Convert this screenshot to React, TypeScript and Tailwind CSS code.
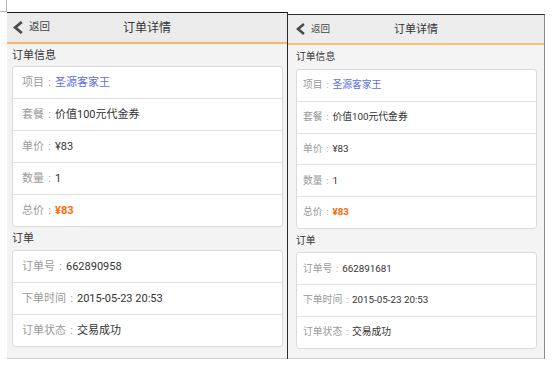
import React from "react";

type Row = { label: string; value: string; kind?: "link" | "total" | "plain" };

const card1: Row[] = [
  { label: "项目", value: "圣源客家王", kind: "link" },
  { label: "套餐", value: "价值100元代金券" },
  { label: "单价", value: "¥83" },
  { label: "数量", value: "1" },
  { label: "总价", value: "¥83", kind: "total" },
];

function Chevron({ w, h }: { w: number; h: number }) {
  return (
    <svg width={w} height={h} viewBox="0 0 10 13" className="shrink-0">
      <polyline points="8.8,1 2.2,6.5 8.8,12" fill="none" stroke="#4a4a4a" strokeWidth="2.8" strokeLinejoin="miter" />
    </svg>
  );
}

function Card({ rows, rowCls, textCls }: { rows: Row[]; rowCls: string; textCls: string }) {
  return (
    <div className="bg-white border border-[#dadada] rounded-[3px] flex flex-col divide-y divide-[#e2e2e2]">
      {rows.map((r) => {
        const color =
          r.kind === "link"
            ? "text-[#5a6ee6]"
            : r.kind === "total"
            ? "text-[#ff6a0a] font-bold"
            : "text-[#333333]";
        return (
          <div key={r.label} className={`box-content ${rowCls} ${textCls} flex items-center`}>
            <span className="text-[#9a9a9a]">{r.label}</span>
            <span className="inline-block w-[1em] text-center text-[#9a9a9a]">:</span>
            <span className={color}>{r.value}</span>
          </div>
        );
      })}
    </div>
  );
}

function LeftPanel() {
  const card2: Row[] = [
    { label: "订单号", value: "662890958" },
    { label: "下单时间", value: "2015-05-23 20:53" },
    { label: "订单状态", value: "交易成功" },
  ];
  return (
    <div className="mt-[12px] w-[281px] h-[347px] shrink-0 flex flex-col border-t border-t-[#1a1a1a] border-r border-r-[#2a2a2a]">
      <div className="h-[29px] bg-[#ebebeb] grid grid-cols-[1fr_auto_1fr] items-center">
        <div className="flex items-center pl-[6px] gap-[6px]">
          <Chevron w={10} h={13} />
          <span className="text-[10.5px] text-[#444]">返回</span>
        </div>
        <div className="text-[12px] text-[#333]">订单详情</div>
        <div />
      </div>
      <div className="h-[2px] bg-[#fbb468]" />
      <div className="flex-1 bg-[#f3f3f3] pl-[5px] pr-[4px] flex flex-col border-b border-b-[#cfcfcf]">
        <div className="h-[22px] flex items-center text-[11px] text-[#333]">订单信息</div>
        <Card rows={card1} rowCls="h-[31px] pl-[9px]" textCls="text-[11px]" />
        <div className="h-[23px] flex items-center text-[11px] text-[#333]">订单</div>
        <Card rows={card2} rowCls="h-[31px] pl-[9px]" textCls="text-[11px]" />
      </div>
    </div>
  );
}

function RightPanel() {
  const card2: Row[] = [
    { label: "订单号", value: "662891681" },
    { label: "下单时间", value: "2015-05-23 20:53" },
    { label: "订单状态", value: "交易成功" },
  ];
  return (
    <div className="mt-[14px] w-[257px] h-[345px] shrink-0 flex flex-col border-t border-t-[#2a2a2a] border-r border-r-[#8a8a8a]">
      <div className="h-[28px] bg-[#ededed] grid grid-cols-[1fr_auto_1fr] items-center">
        <div className="flex items-center pl-[8px] gap-[6px]">
          <Chevron w={9} h={12} />
          <span className="text-[9.5px] text-[#444]">返回</span>
        </div>
        <div className="text-[11px] text-[#333]">订单详情</div>
        <div />
      </div>
      <div className="h-[2px] bg-[#fbc07c]" />
      <div className="flex-1 bg-[#f4f4f4] pl-[8px] pr-[7px] flex flex-col border-b border-b-[#cfcfcf]">
        <div className="h-[24px] flex items-center text-[9.8px] text-[#333]">订单信息</div>
        <Card rows={card1} rowCls="h-[30.75px] pl-[6px]" textCls="text-[9.8px]" />
        <div className="h-[23.5px] flex items-center text-[9.8px] text-[#333]">订单</div>
        <Card rows={card2} rowCls="h-[30.75px] pl-[6px]" textCls="text-[9.8px]" />
      </div>
    </div>
  );
}

export default function App() {
  return (
    <div className="w-[559px] h-[365px] bg-white flex items-start overflow-hidden font-[Roboto,'Noto_Sans_CJK_SC',sans-serif] leading-none">
      <div className="w-[7px] h-[12px] shrink-0 border-r border-b border-[#b5b5b5]" />
      <LeftPanel />
      <RightPanel />
    </div>
  );
}
